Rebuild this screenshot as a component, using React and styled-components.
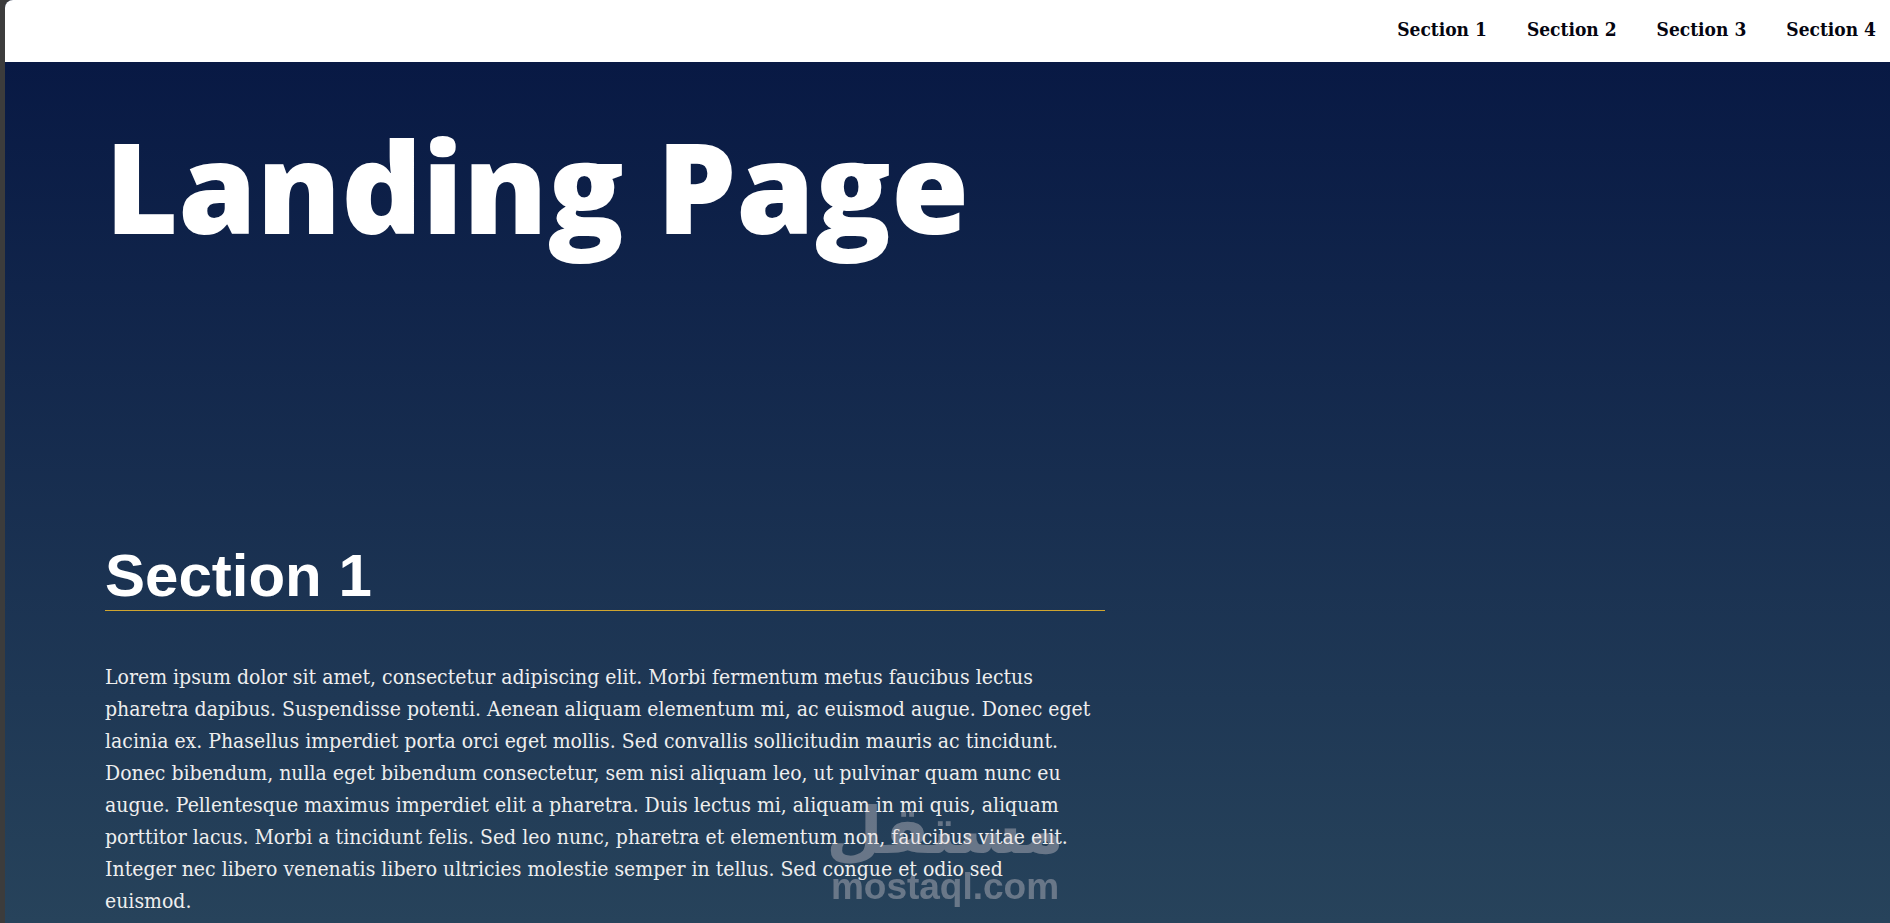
import styled, { createGlobalStyle } from "styled-components"

const sections = ["Section 1", "Section 2", "Section 3", "Section 4"]

function App() {
  return (
    <Page>
      <GlobalStyle />
      <Header>
        <Nav>
          {sections.map((name, i) => (
            <NavLink key={name} href={`#section${i + 1}`}>{name}</NavLink>
          ))}
        </Nav>
      </Header>

      <Main>
        <Title>Landing Page</Title>
        <Section id="section1">
          <SectionTitle>Section 1</SectionTitle>
          <Text>
            Lorem ipsum dolor sit amet, consectetur adipiscing elit. Morbi fermentum metus faucibus lectus
            pharetra dapibus. Suspendisse potenti. Aenean aliquam elementum mi, ac euismod augue. Donec eget
            lacinia ex. Phasellus imperdiet porta orci eget mollis. Sed convallis sollicitudin mauris ac tincidunt.
            Donec bibendum, nulla eget bibendum consectetur, sem nisi aliquam leo, ut pulvinar quam nunc eu
            augue. Pellentesque maximus imperdiet elit a pharetra. Duis lectus mi, aliquam in mi quis, aliquam
            porttitor lacus. Morbi a tincidunt felis. Sed leo nunc, pharetra et elementum non, faucibus vitae elit.
            Integer nec libero venenatis libero ultricies molestie semper in tellus. Sed congue et odio sed
            <br />
            euismod.
          </Text>
        </Section>
      </Main>

      <Watermark>
        <WatermarkName lang="ar" dir="rtl">مستقل</WatermarkName>
        <WatermarkSite>mostaql.com</WatermarkSite>
      </Watermark>
    </Page>
  )
}

const GlobalStyle = createGlobalStyle`
  * {
    box-sizing: border-box;
  }

  body {
    margin: 0;
    background: #3c3c3c;
    font-family: "DejaVu Serif Condensed", "DejaVu Serif", serif;
  }
`

const Page = styled.div`
  display: flex;
  flex-direction: column;
  min-height: 100vh;
  margin-left: 5px;
  border-top-left-radius: 8px;
  overflow: hidden;
  background: linear-gradient(#081944 62px, #27435b);
`

const Header = styled.header`
  background: #fff;
`

const Nav = styled.nav`
  display: flex;
  justify-content: flex-end;
  flex-wrap: wrap;
  gap: 40px;
  padding: 13px 14px 17px;
`

const NavLink = styled.a`
  color: #050510;
  font-size: 19px;
  font-weight: bold;
  line-height: 32px;
  text-decoration: none;
`

const Main = styled.main`
  flex: 1;
  padding: 28px 100px 0;
`

const Title = styled.h1`
  margin: 0;
  color: #fff;
  font-family: "Open Sans", sans-serif;
  font-size: 126px;
  font-weight: 800;
  line-height: 190px;
`

const Section = styled.section`
  max-width: 1000px;
  padding-top: 262px;
`

const SectionTitle = styled.h2`
  margin: 0 0 50px;
  border-bottom: 1px solid #d0a52f;
  color: #fff;
  font-family: "Liberation Sans", Arial, sans-serif;
  font-size: 60px;
  line-height: 68px;
`

const Text = styled.p`
  margin: 0;
  color: #eee;
  font-size: 21px;
  line-height: 32px;
`

/* stamp laid over the page, centred at the bottom of the window */
const Watermark = styled.div`
  position: fixed;
  right: 0;
  bottom: 16px;
  left: 0;
  display: flex;
  flex-direction: column;
  align-items: center;
  color: #e9dde0;
  opacity: 0.35;
  pointer-events: none;
`

const WatermarkName = styled.span`
  font-family: "DejaVu Sans", sans-serif;
  font-size: 65px;
  font-weight: bold;
  line-height: 72px;
`

const WatermarkSite = styled.span`
  font-family: "Liberation Sans", Arial, sans-serif;
  font-size: 37px;
  font-weight: bold;
  line-height: 40px;
`

export default App
